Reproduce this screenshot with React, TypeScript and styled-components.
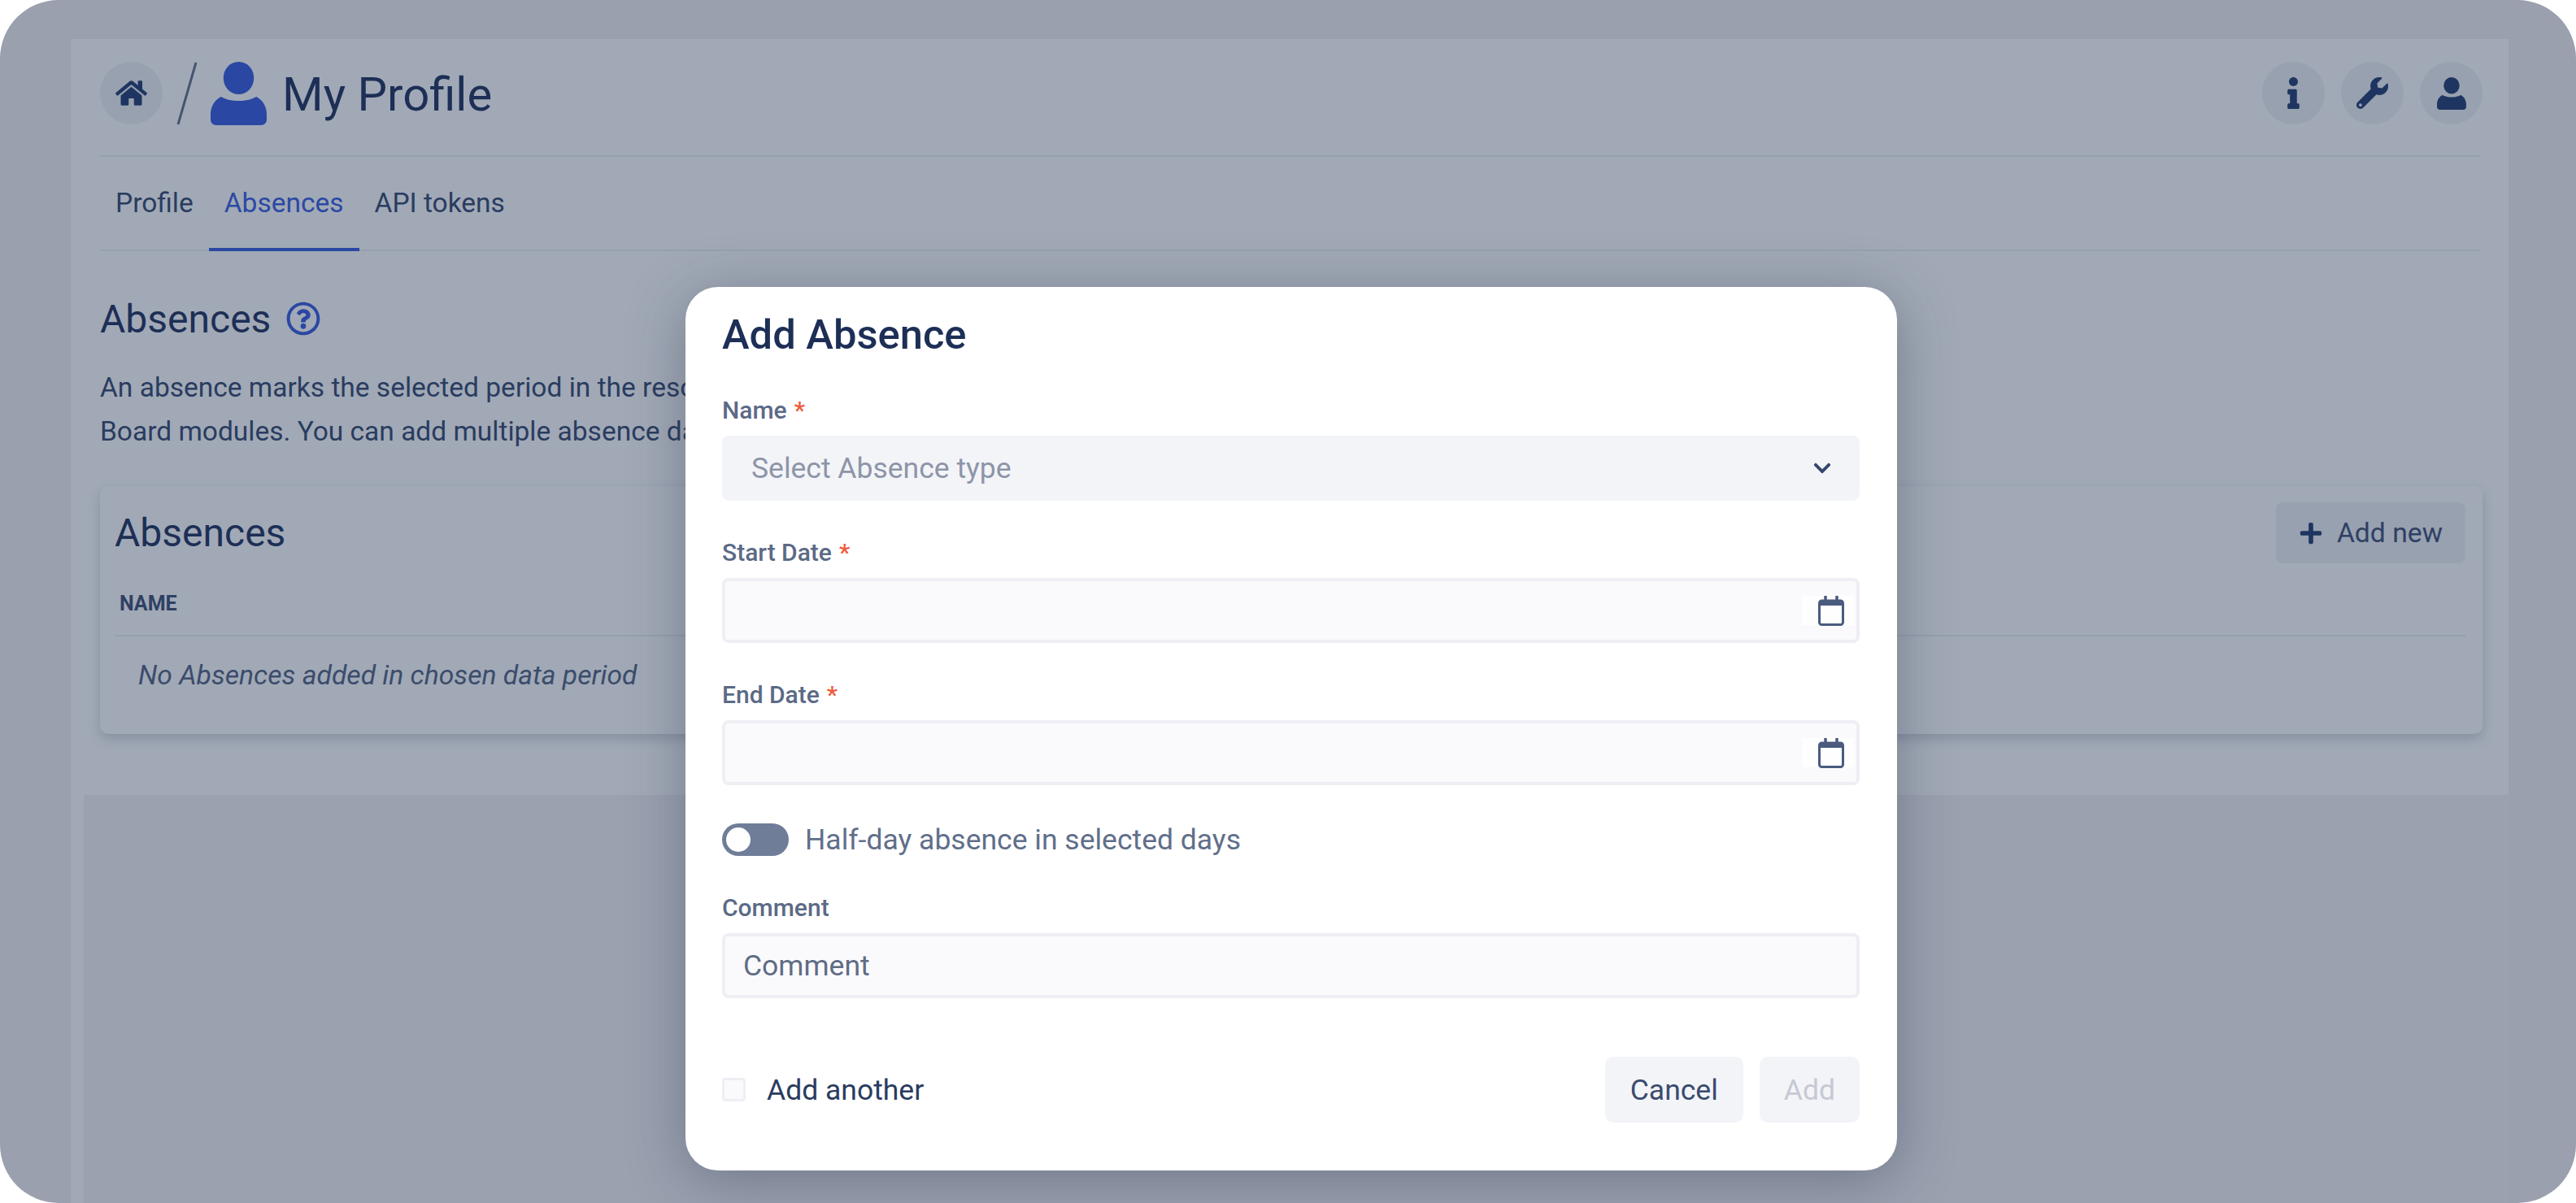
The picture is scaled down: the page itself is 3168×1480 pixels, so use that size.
import React from 'react'
import styled, { createGlobalStyle } from 'styled-components'
import {
  FaChevronDown,
  FaHome,
  FaInfo,
  FaPlus,
  FaRegQuestionCircle,
  FaWrench,
} from 'react-icons/fa'

const GlobalStyle = createGlobalStyle`
  html, body {
    margin: 0;
    padding: 0;
    background: #ffffff;
  }
  * {
    box-sizing: border-box;
  }
`

const Frame = styled.div`
  position: relative;
  width: 3168px;
  height: 1480px;
  overflow: hidden;
  border-radius: 72px;
  background: #9aa0ae;
  font-family: 'Roboto', sans-serif;
  padding: 48px 83px 0 87px;
`

const Page = styled.main`
  height: 100%;
  display: flex;
  flex-direction: column;
  background: #a1a9b6;
  padding: 0 35px 0 36px;
`

const Header = styled.header`
  height: 145px;
  flex-shrink: 0;
  display: flex;
  align-items: center;
  justify-content: space-between;
  border-bottom: 2px solid #96a0ad;
  padding-bottom: 10px;
`

const Crumbs = styled.div`
  display: flex;
  align-items: center;
`

const Actions = styled.div`
  display: flex;
  align-items: center;
  gap: 20px;
  margin-right: -3px;
`

const RoundButton = styled.div`
  width: 77px;
  height: 77px;
  border-radius: 50%;
  background: #98a1af;
  color: #1f3561;
  display: flex;
  align-items: center;
  justify-content: center;
  font-size: 39px;
`

const Slash = styled.svg`
  width: 26px;
  height: 78px;
  margin: 0 16px 0 17px;
`

const PageIcon = styled.svg`
  width: 69px;
  height: 78px;
  color: #2a47a3;
  margin-right: 19px;
`

const PageTitle = styled.h1`
  margin: 2px 0 0;
  font-size: 58px;
  font-weight: 400;
  color: #1d2f56;
`

const Tabs = styled.nav`
  height: 116px;
  flex-shrink: 0;
  display: flex;
  border-bottom: 2px solid #96a0ad;
`

const Tab = styled.div<{ $active?: boolean }>`
  height: 116px;
  padding: 0 19px;
  display: flex;
  align-items: center;
  font-size: 33.5px;
  color: ${props => (props.$active ? '#2c49a4' : '#2a3c60')};
  border-bottom: 4px solid ${props => (props.$active ? '#2a47a3' : 'transparent')};
`

const SectionTitle = styled.h2`
  margin: 59px 0 34px;
  height: 48px;
  display: flex;
  align-items: center;
  gap: 19px;
  font-size: 48px;
  font-weight: 400;
  color: #1d2f56;
  svg {
    color: #2a47a3;
    font-size: 42px;
  }
`

const Description = styled.p`
  margin: 0;
  font-size: 33.5px;
  line-height: 54px;
  color: #2a3c60;
  white-space: nowrap;
`

const Card = styled.section`
  margin: 40px -3px 0 0;
  height: 305px;
  flex-shrink: 0;
  border-radius: 10px;
  background: #a1a9b6;
  box-shadow: 0 6px 14px rgba(60, 72, 95, 0.25);
  padding: 20px 21px 0 18px;
`

const CardTop = styled.div`
  height: 75px;
  display: flex;
  align-items: center;
  justify-content: space-between;
`

const CardTitle = styled.h3`
  margin: 0;
  font-size: 48px;
  font-weight: 400;
  color: #1d2f56;
`

const AddNewButton = styled.div`
  height: 75px;
  padding: 0 28px;
  display: flex;
  align-items: center;
  gap: 17px;
  border-radius: 8px;
  background: #98a1af;
  font-size: 33.7px;
  color: #2f4064;
  svg {
    color: #1f3561;
    font-size: 30px;
  }
`

const TableHead = styled.div`
  height: 90px;
  padding: 10px 0 0 6px;
  display: flex;
  align-items: center;
  border-bottom: 2px solid #96a0ad;
  font-size: 25px;
  font-weight: 700;
  color: #2f4064;
`

const EmptyRow = styled.div`
  height: 95px;
  padding-left: 29px;
  display: flex;
  align-items: center;
  font-size: 33.7px;
  font-style: italic;
  color: #3c4c6c;
`

const LowerBand = styled.div`
  flex: 1;
  margin: 75px -35px 0 -20px;
  background: #9aa1af;
`

const Modal = styled.div`
  position: absolute;
  left: 843px;
  top: 353px;
  width: 1490px;
  height: 1087px;
  display: flex;
  flex-direction: column;
  padding: 30px 46px 0 45px;
  border-radius: 40px;
  background: #ffffff;
  box-shadow: 0 12px 70px rgba(38, 46, 72, 0.36);
`

const ModalTitle = styled.h2`
  margin: 0 0 47px;
  height: 58px;
  line-height: 58px;
  font-size: 50.7px;
  font-weight: 500;
  color: #1d2f56;
`

const Field = styled.div`
  display: flex;
  flex-direction: column;
  margin-bottom: 47px;
`

const Label = styled.label`
  height: 34px;
  line-height: 34px;
  margin-bottom: 14px;
  font-size: 30px;
  font-weight: 500;
  color: #5b6a86;
`

const Required = styled.span`
  color: #f0593a;
  margin-left: 9px;
`

const SelectBox = styled.div`
  height: 80px;
  padding: 0 36px;
  display: flex;
  align-items: center;
  justify-content: space-between;
  border-radius: 8px;
  background: #f3f4f8;
  font-size: 35.5px;
  color: #8d95a8;
  svg {
    color: #34466c;
    font-size: 24px;
    margin-right: -2px;
  }
`

const InputBox = styled.div`
  height: 80px;
  display: flex;
  align-items: center;
  border: 4px solid #eeeff4;
  border-radius: 8px;
  background: #fafafd;
`

const TextInput = styled.input`
  flex: 1;
  height: 100%;
  min-width: 0;
  padding: 0 22px;
  border: none;
  outline: none;
  background: transparent;
  font-family: 'Roboto', sans-serif;
  font-size: 35.5px;
  color: #2a3c60;
  &::placeholder {
    color: #5f6c85;
    opacity: 1;
  }
`

const CalendarSlot = styled.span`
  width: 64px;
  height: 36px;
  margin-right: 3px;
  display: flex;
  align-items: center;
  justify-content: flex-end;
  padding-right: 12px;
  background: #fefefe;
  color: #4a5b7e;
`

const CalendarIcon = styled.svg`
  width: 32px;
  height: 37px;
`

const ToggleRow = styled.div`
  height: 40px;
  margin-bottom: 47px;
  display: flex;
  align-items: center;
  gap: 20px;
  font-size: 35.5px;
  color: #616f8a;
`

const Toggle = styled.span`
  width: 82px;
  height: 40px;
  padding: 5px;
  display: flex;
  border-radius: 20px;
  background: #6f7d99;
  &::before {
    content: '';
    width: 30px;
    height: 30px;
    border-radius: 50%;
    background: #ffffff;
  }
`

const Footer = styled.div`
  margin-top: 25px;
  display: flex;
  align-items: center;
  justify-content: space-between;
`

const CheckLabel = styled.div`
  display: flex;
  align-items: center;
  gap: 26px;
  font-size: 35.5px;
  color: #2a3c60;
`

const CheckBox = styled.span`
  width: 29px;
  height: 29px;
  border: 3px solid #eeeff4;
  border-radius: 4px;
  background: #fafafd;
`

const FooterActions = styled.div`
  display: flex;
  gap: 20px;
`

const Button = styled.button<{ $disabled?: boolean }>`
  height: 81px;
  padding: 0 ${props => (props.$disabled ? '30px' : '31px')};
  border: none;
  border-radius: 10px;
  background: #f3f4f8;
  font-family: 'Roboto', sans-serif;
  font-size: 35.5px;
  color: ${props => (props.$disabled ? '#c6c9d3' : '#3a4b70')};
`

const SmallUserIcon = styled.svg`
  width: 36px;
  height: 40px;
`

const UserShape = () => (
  <>
    <ellipse cx="35" cy="20" rx="19" ry="20" />
    <path d="M13 43c5 3 13 5 22 5s17-2 22-5c8 4 13 12 13 22v6c0 4-3 7-7 7H7c-4 0-7-3-7-7v-6c0-10 5-18 13-22z" />
  </>
)

const Calendar = () => (
  <CalendarSlot>
    <CalendarIcon viewBox="0 0 32 37">
      <rect x="1.5" y="6" width="29" height="29.5" rx="3" fill="none" stroke="currentColor" strokeWidth="3" />
      <path d="M3 6h26v6H3z" fill="currentColor" />
      <path d="M9 1v7M23 1v7" stroke="currentColor" strokeWidth="3.5" strokeLinecap="round" />
    </CalendarIcon>
  </CalendarSlot>
)

const App = () => (
  <>
    <GlobalStyle />
    <Frame>
      <Page>
        <Header>
          <Crumbs>
            <RoundButton>
              <FaHome />
            </RoundButton>
            <Slash viewBox="0 0 26 78">
              <line x1="24" y1="1" x2="2" y2="77" stroke="#46556f" strokeWidth="3" />
            </Slash>
            <PageIcon viewBox="0 0 70 78" fill="currentColor" preserveAspectRatio="none">
              <UserShape />
            </PageIcon>
            <PageTitle>My Profile</PageTitle>
          </Crumbs>
          <Actions>
            <RoundButton>
              <FaInfo />
            </RoundButton>
            <RoundButton>
              <FaWrench />
            </RoundButton>
            <RoundButton>
              <SmallUserIcon viewBox="0 0 70 78" fill="currentColor">
                <UserShape />
              </SmallUserIcon>
            </RoundButton>
          </Actions>
        </Header>
        <Tabs>
          <Tab>Profile</Tab>
          <Tab $active>Absences</Tab>
          <Tab>API tokens</Tab>
        </Tabs>
        <SectionTitle>
          Absences
          <FaRegQuestionCircle />
        </SectionTitle>
        <Description>An absence marks the selected period in the resource planner</Description>
        <Description>Board modules. You can add multiple absence dates</Description>
        <Card>
          <CardTop>
            <CardTitle>Absences</CardTitle>
            <AddNewButton>
              <FaPlus />
              Add new
            </AddNewButton>
          </CardTop>
          <TableHead>NAME</TableHead>
          <EmptyRow>No Absences added in chosen data period</EmptyRow>
        </Card>
        <LowerBand />
      </Page>
      <Modal>
        <ModalTitle>Add Absence</ModalTitle>
        <Field>
          <Label>
            Name<Required>*</Required>
          </Label>
          <SelectBox>
            Select Absence type
            <FaChevronDown />
          </SelectBox>
        </Field>
        <Field>
          <Label>
            Start Date<Required>*</Required>
          </Label>
          <InputBox>
            <TextInput />
            <Calendar />
          </InputBox>
        </Field>
        <Field>
          <Label>
            End Date<Required>*</Required>
          </Label>
          <InputBox>
            <TextInput />
            <Calendar />
          </InputBox>
        </Field>
        <ToggleRow>
          <Toggle />
          Half-day absence in selected days
        </ToggleRow>
        <Field>
          <Label>Comment</Label>
          <InputBox>
            <TextInput placeholder="Comment" />
          </InputBox>
        </Field>
        <Footer>
          <CheckLabel>
            <CheckBox />
            Add another
          </CheckLabel>
          <FooterActions>
            <Button>Cancel</Button>
            <Button $disabled>Add</Button>
          </FooterActions>
        </Footer>
      </Modal>
    </Frame>
  </>
)

export default App
